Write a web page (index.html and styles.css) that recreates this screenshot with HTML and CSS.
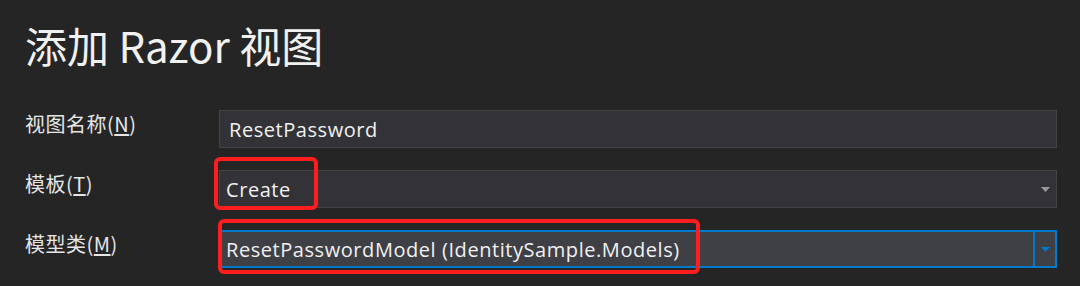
FILE: index.html
```html
<!DOCTYPE html>
<html lang="zh-CN">
<head>
<meta charset="utf-8">
<title>添加 Razor 视图</title>
<link rel="stylesheet" href="styles.css">
</head>
<body>
<div class="dialog">
  <h1 class="title">添加 Razor 视图</h1>
  <div class="form">
    <label class="label">视图名称(<u>N</u>)</label>
    <div class="field">
      <div class="input">ResetPassword</div>
    </div>

    <label class="label">模板(<u>T</u>)</label>
    <div class="field">
      <div class="combo">
        <span class="value">Create</span>
        <span class="arrow"><svg width="9" height="5" viewBox="0 0 9 5"><path d="M0 0h9L4.5 5z" fill="#999999"/></svg></span>
      </div>
      <div class="mark mark-template"></div>
    </div>

    <label class="label">模型类(<u>M</u>)</label>
    <div class="field">
      <div class="combo combo-focus">
        <span class="value">ResetPasswordModel (IdentitySample.Models)</span>
        <span class="arrow arrow-split"><svg width="9" height="5" viewBox="0 0 9 5"><path d="M0 0h9L4.5 5z" fill="#007acc"/></svg></span>
      </div>
      <div class="mark mark-model"></div>
    </div>
  </div>
</div>
</body>
</html>
```

FILE: styles.css
```css
html, body {
  margin: 0;
  padding: 0;
  background: #252526;
}
body {
  width: 1080px;
  height: 286px;
  overflow: hidden;
  font-family: "Noto Sans CJK SC", "Noto Sans", sans-serif;
  color: #f1f1f1;
}
.dialog {
  padding: 17px 23px 0 25px;
}
.title {
  margin: 0;
  font-weight: 400;
  font-size: 42px;
  line-height: 56px;
  color: #f1f1f1;
}
.form {
  margin-top: 37px;
  display: grid;
  grid-template-columns: 194px 1fr;
  row-gap: 22px;
  align-items: start;
}
.label {
  font-size: 20px;
  line-height: 28px;
  letter-spacing: 0.5px;
  color: #e6e6e6;
}
.label u {
  text-underline-offset: 2px;
}
.field {
  position: relative;
}
.input, .combo {
  box-sizing: border-box;
  height: 38px;
  background: #333337;
  border: 1px solid #434346;
  font-family: "Open Sans", "Noto Sans CJK SC", sans-serif;
  font-size: 20px;
  letter-spacing: 0.56px;
  color: #f1f1f1;
  display: flex;
  align-items: center;
}
.input {
  padding-left: 9px;
}
.combo {
  padding-left: 6px;
}
.value {
  flex: 1;
}
.arrow {
  width: 22px;
  align-self: stretch;
  display: flex;
  align-items: center;
  justify-content: center;
}
.combo-focus {
  border: 2px solid #007acc;
  background: #3f3f46;
  padding-left: 5px;
}
.arrow-split {
  width: 20px;
  border-left: 2px solid #007acc;
}
.mark {
  position: absolute;
  box-sizing: border-box;
  border: 4px solid #ff1d1d;
  border-radius: 6px;
}
.mark-template {
  left: -5px;
  top: -13px;
  width: 104px;
  height: 53px;
}
.mark-model {
  left: -1px;
  top: -11px;
  width: 482px;
  height: 55px;
}
```
